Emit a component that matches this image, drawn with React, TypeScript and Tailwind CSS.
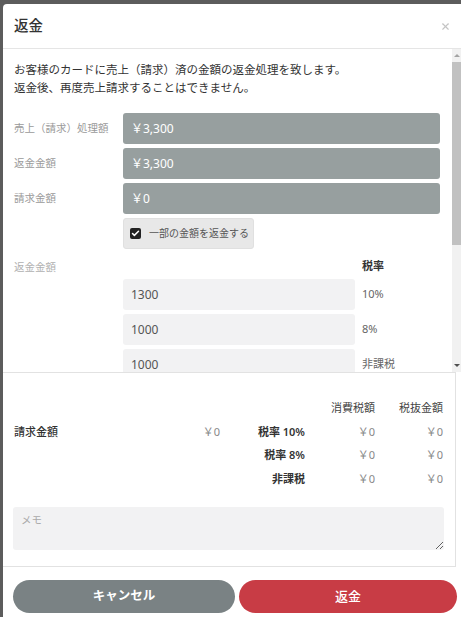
import { Check, X } from 'lucide-react'

const font = { fontFamily: '"Noto Sans", "Noto Sans CJK JP", sans-serif' }

const readonlyRows = [
  { label: '売上（請求）処理額', value: '￥3,300' },
  { label: '返金金額', value: '￥3,300' },
  { label: '請求金額', value: '￥0' },
]

const partialRows = [
  { value: '1300', rate: '10%' },
  { value: '1000', rate: '8%' },
  { value: '1000', rate: '非課税' },
]

const summaryRows = [
  { rate: '税率 10%', tax: '￥0', net: '￥0' },
  { rate: '税率 8%', tax: '￥0', net: '￥0' },
  { rate: '非課税', tax: '￥0', net: '￥0' },
]

function FakeScrollbar() {
  return (
    <div className="w-[9px] shrink-0 bg-[#f1f1f1] flex flex-col items-center">
      <div className="h-[13px] flex items-center justify-center">
        <span className="block w-0 h-0 border-x-[3px] border-x-transparent border-b-[3px] border-b-[#a3a3a3]" />
      </div>
      <div className="w-full h-[183px] bg-[#c1c1c1]" />
      <div className="flex-1" />
      <div className="h-[13px] flex items-center justify-center">
        <span className="block w-0 h-0 border-x-[3px] border-x-transparent border-t-[3px] border-t-[#505050]" />
      </div>
    </div>
  )
}

export default function App() {
  return (
    <div className="w-[461px] h-[617px] bg-[#5c5c5c] pt-[4px] pl-[3px] overflow-hidden" style={font}>
      <div className="h-full bg-white rounded-tl-[4px] flex flex-col">
        {/* Header */}
        <div className="h-[45px] shrink-0 flex items-center justify-between pl-[11px] pr-[10px] border-b border-[#e5e5e5]">
          <h1 className="text-[14.5px] font-medium text-[#333]">返金</h1>
          <X className="h-[11px] w-[11px] text-[#c4c4c4]" strokeWidth={2.5} />
        </div>

        {/* Scrollable body */}
        <div className="h-[323px] shrink-0 flex">
          <div className="flex-1 overflow-hidden pl-[11px] pr-[12px] pt-[12px]">
            <p className="text-[11.5px] leading-[18px] text-[#333] whitespace-nowrap">
              お客様のカードに売上（請求）済の金額の返金処理を致します。
              <br />
              返金後、再度売上請求することはできません。
            </p>

            <div className="mt-[16px] flex flex-col gap-[4px]">
              {readonlyRows.map(row => (
                <div key={row.label} className="flex items-center">
                  <span className="w-[109px] shrink-0 text-[10.5px] text-[#9a9a9a] whitespace-nowrap">{row.label}</span>
                  <div className="flex-1 h-[31px] rounded-[3px] bg-[#979f9f] flex items-center px-[8px] text-[12px] text-white">
                    {row.value}
                  </div>
                </div>
              ))}
              <div className="flex">
                <div className="w-[109px] shrink-0" />
                <div className="h-[31px] w-[131px] rounded-[3px] bg-[#e8e8e8] border border-[#e0e0e0] flex items-center gap-[8px] px-[6px]">
                  <span className="h-[11px] w-[11px] shrink-0 bg-[#222] rounded-[2px] flex items-center justify-center">
                    <Check className="h-[9px] w-[9px] text-white" strokeWidth={4} />
                  </span>
                  <span className="text-[10px] text-[#555] whitespace-nowrap">一部の金額を返金する</span>
                </div>
              </div>
            </div>

            <div className="mt-[11px] h-[16px] flex items-center">
              <span className="w-[109px] shrink-0 text-[10.5px] text-[#b0b0b0]">返金金額</span>
              <div className="flex-1" />
              <span className="w-[85px] shrink-0 text-[11px] font-bold text-[#333] pl-[7px] -mt-[4px]">税率</span>
            </div>
            <div className="mt-[3px] flex flex-col gap-[4px]">
              {partialRows.map(row => (
                <div key={row.rate} className="flex items-center">
                  <div className="w-[109px] shrink-0" />
                  <div className="flex-1 h-[31px] rounded-[3px] bg-[#f2f2f3] flex items-center px-[8px] text-[12px] text-[#555]">
                    {row.value}
                  </div>
                  <span className="w-[85px] shrink-0 pl-[7px] text-[11px] text-[#666]">{row.rate}</span>
                </div>
              ))}
            </div>
          </div>
          <FakeScrollbar />
        </div>

        {/* Summary + memo */}
        <div className="w-[453px] border-t border-r border-b border-[#e2e2e2] pl-[11px] pr-[12px] pt-[23px] pb-[16px]">
          <div className="grid grid-cols-[120px_86px_85px_70px_1fr] text-[11px] leading-[23.5px]">
            <span />
            <span />
            <span />
            <span className="text-right text-[#444]">消費税額</span>
            <span className="text-right text-[#444]">税抜金額</span>

            {summaryRows.map((row, i) => (
              <div key={row.rate} className="contents">
                <span className="font-medium text-[#333]">{i === 0 ? '請求金額' : ''}</span>
                <span className="text-right text-[#888]">{i === 0 ? '￥0' : ''}</span>
                <span className="text-right font-semibold text-[#333]">{row.rate}</span>
                <span className="text-right text-[#888]">{row.tax}</span>
                <span className="text-right text-[#888]">{row.net}</span>
              </div>
            ))}
          </div>

          <textarea
            placeholder="メモ"
            className="mt-[17px] block w-[431px] h-[43px] -ml-[1px] rounded-[3px] bg-[#f2f2f3] px-[8px] py-[6px] text-[10.5px] text-[#555] placeholder:text-[#aaa] outline-none"
            style={font}
          />
        </div>

        {/* Footer */}
        <div className="flex gap-[4px] pl-[10px] pt-[13px]">
          <button className="w-[222px] h-[33px] rounded-full bg-[#7a8284] text-white text-[12.5px] font-bold">
            キャンセル
          </button>
          <button className="w-[218px] h-[33px] rounded-full bg-[#c83c45] text-white text-[13px] font-medium">
            返金
          </button>
        </div>
      </div>
    </div>
  )
}
